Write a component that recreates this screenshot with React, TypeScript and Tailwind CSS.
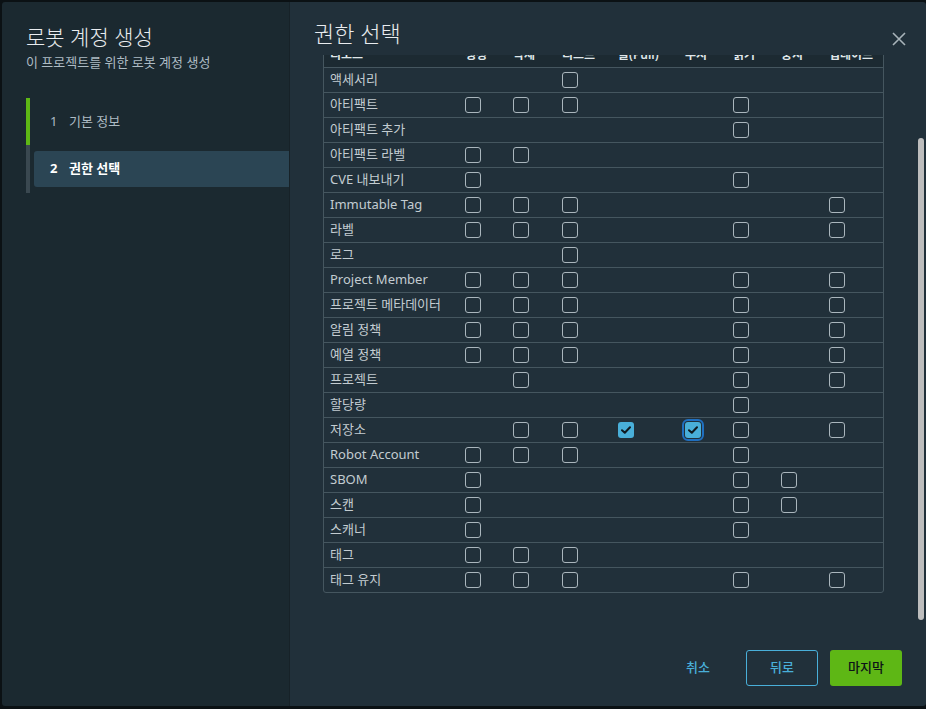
import React from 'react';

type Cell = '.' | 'o' | 'x' | 'f';

const HEADERS = ['리소스', '생성', '삭제', '리스트', '풀(Pull)', '푸시', '읽기', '중지', '업데이트'];

// columns: 생성 삭제 리스트 풀 푸시 읽기 중지 업데이트
const ROWS: [string, string][] = [
  ['액세서리', '..o.....'],
  ['아티팩트', 'ooo..o..'],
  ['아티팩트 추가', '.....o..'],
  ['아티팩트 라벨', 'oo......'],
  ['CVE 내보내기', 'o....o..'],
  ['Immutable Tag', 'ooo....o'],
  ['라벨', 'ooo..o.o'],
  ['로그', '..o.....'],
  ['Project Member', 'ooo..o.o'],
  ['프로젝트 메타데이터', 'ooo..o.o'],
  ['알림 정책', 'ooo..o.o'],
  ['예열 정책', 'ooo..o.o'],
  ['프로젝트', '.o...o.o'],
  ['할당량', '.....o..'],
  ['저장소', '.ooxfo.o'],
  ['Robot Account', 'ooo..o..'],
  ['SBOM', 'o....oo.'],
  ['스캔', 'o....oo.'],
  ['스캐너', 'o....o..'],
  ['태그', 'ooo.....'],
  ['태그 유지', 'ooo..o.o'],
];

const GRID = 'grid grid-cols-[129px_48px_49px_56px_67px_48px_48px_48px_66px]';

const Check = () => (
  <svg width="10" height="8" viewBox="0 0 10 8" fill="none">
    <path d="M1 4.2 L3.8 6.8 L9 1.2" stroke="#0f1a20" strokeWidth="2" strokeLinecap="round" strokeLinejoin="round" />
  </svg>
);

const Box: React.FC<{ state: Cell }> = ({ state }) => {
  if (state === '.') return null;
  if (state === 'o') {
    return <div className="w-4 h-4 rounded-[3px] border-[1.5px] border-[#aab6bd]" />;
  }
  return (
    <div
      className={
        'w-4 h-4 rounded-[3px] bg-[#49afd9] flex items-center justify-center ' +
        (state === 'f' ? 'outline-2 outline-[#1f6fc0] outline-offset-[1px]' : '')
      }
    >
      <Check />
    </div>
  );
};

const App: React.FC = () => {
  return (
    <div
      className="w-[926px] h-[709px] bg-[#0b1114] pt-[2px] pl-[2px] pb-[3px] overflow-hidden"
      style={{ fontFamily: '"Noto Sans", "Noto Sans CJK KR", sans-serif' }}
    >
      <div className="flex h-full rounded-[3px] overflow-hidden">
        {/* left nav */}
        <div className="w-[288px] shrink-0 bg-[#1b2930] border-r border-[#172228] pl-6 pt-[22px]">
          <h1 className="text-[21px] leading-[26px] font-light text-[#e9ecef]">로봇 계정 생성</h1>
          <p className="mt-[3px] text-[13px] leading-[18px] text-[#adbbc4]">이 프로젝트를 위한 로봇 계정 생성</p>

          <div className="mt-[27px]">
            <div className="h-[47px] border-l-4 border-[#5eb715] flex items-center">
              <div className="pl-5 flex items-center text-[13px] text-[#adbbc4]">
                <span className="w-[19px]">1</span>
                <span>기본 정보</span>
              </div>
            </div>
            <div className="h-[48px] border-l-4 border-[#3a4850] py-1.5 pl-1">
              <div className="h-full bg-[#2b4554] rounded-l-[3px] flex items-center pl-4 text-[13px] font-bold text-white">
                <span className="w-[19px]">2</span>
                <span>권한 선택</span>
              </div>
            </div>
          </div>
        </div>

        {/* right content */}
        <div className="flex-1 flex bg-[#21303a]">
          <div className="flex-1 flex flex-col">
            <div className="h-[53px] shrink-0 flex justify-between pl-6 pr-2 pt-[17px]">
              <h2 className="text-[22px] leading-[28px] font-light text-[#e9ecef]">권한 선택</h2>
              <svg width="14" height="14" viewBox="0 0 14 14" className="mt-[13px]">
                <path d="M1 1 L13 13 M13 1 L1 13" stroke="#a8b3b9" strokeWidth="1.6" />
              </svg>
            </div>

            <div className="h-[575px] shrink-0 overflow-hidden pl-[33px]">
              <div className="-mt-[14px] w-[561px] border border-[#45565f] rounded-[3px] text-[13px]">
                <div className={GRID + ' h-[25px] items-center bg-[#1c2a32] text-[12px] font-semibold text-[#dfe5e8]'}>
                  {HEADERS.map((h, i) => (
                    <div key={h} className={i === 0 ? 'pl-[6px]' : 'pl-3'}>
                      {h}
                    </div>
                  ))}
                </div>
                {ROWS.map(([label, cells]) => (
                  <div key={label} className={GRID + ' h-[25px] border-t border-[#45565f] items-center'}>
                    <div className="pl-[6px] text-[#c3ccd1] whitespace-nowrap">{label}</div>
                    {cells.split('').map((c, i) => (
                      <div key={i} className="pl-3 flex items-center">
                        <Box state={c as Cell} />
                      </div>
                    ))}
                  </div>
                ))}
              </div>
            </div>

            <div className="flex-1 flex items-center justify-end gap-3 pr-3">
              <button className="w-[72px] h-9 text-[13px] font-medium text-[#49afd9]">취소</button>
              <button className="w-[72px] h-9 rounded-[3px] border border-[#49afd9] text-[13px] font-medium text-[#49afd9]">
                뒤로
              </button>
              <button className="w-[72px] h-9 rounded-[3px] bg-[#5eb715] text-[13px] font-medium text-[#0d1418]">
                마지막
              </button>
            </div>
          </div>

          {/* scrollbar */}
          <div className="w-3 shrink-0 pl-1 pt-[136px]">
            <div className="w-[6px] h-[482px] rounded-full bg-[#bdbdbd]" />
          </div>
        </div>
      </div>
    </div>
  );
};

export default App;
